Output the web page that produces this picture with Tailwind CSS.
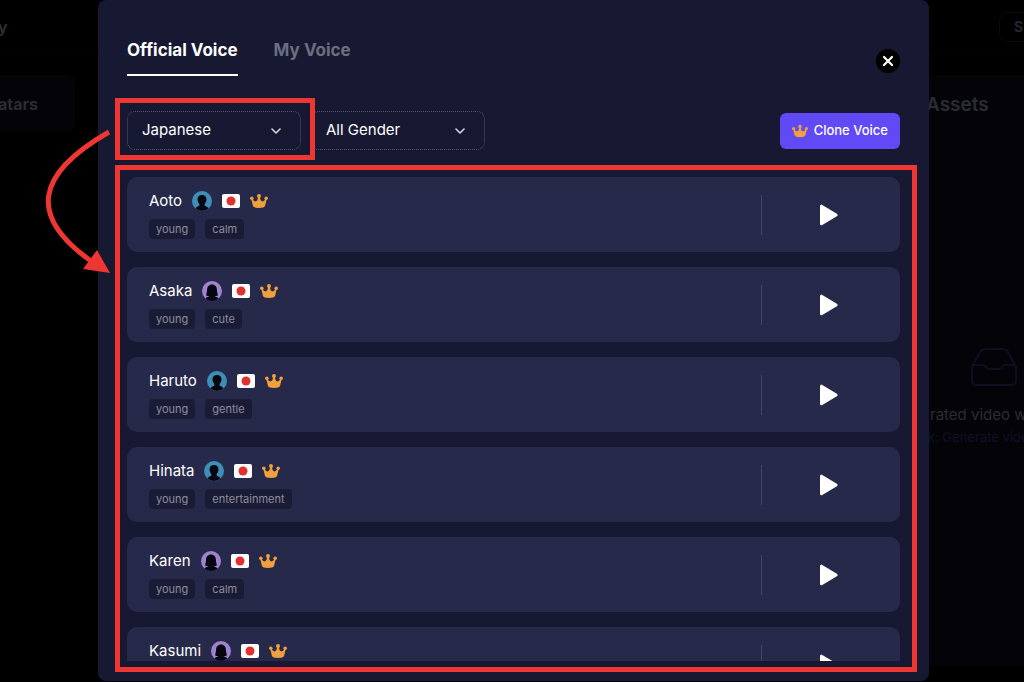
<!DOCTYPE html>
<html lang="en">
<head>
  <meta charset="UTF-8">
  <meta name="viewport" content="width=device-width, initial-scale=1">
  <title>Official Voice</title>
  <script src="https://cdn.jsdelivr.net/npm/@tailwindcss/browser@4"></script>
</head>
<body class="h-screen overflow-hidden bg-black font-['Inter','Liberation_Sans',sans-serif] text-white">

<!-- Icons -->
<svg class="hidden" xmlns="http://www.w3.org/2000/svg">
  <symbol id="male" viewBox="0 0 20 20">
    <circle cx="10" cy="10" r="10" fill="#3d8fb8"/>
    <path d="M10 4c-2.900 0-4.600 1.900-4.500 4.600.1 1.800.8 3.400 1.900 4.500v1.500c-.7 1-2.900 1-3.900 2.600A9.900 9.900 0 0 0 10 20a9.900 9.900 0 0 0 6.500-2.800c-1-1.600-3.200-1.600-3.900-2.600v-1.500c1.100-1.100 1.800-2.700 1.900-4.500C14.600 5.900 12.900 4 10 4z" fill="#05060f"/>
  </symbol>
  <symbol id="female" viewBox="0 0 20 20">
    <circle cx="10" cy="10" r="10" fill="#9f83cf"/>
    <path d="M10 3.500c-3.200 0-4.900 2.300-4.900 5.300 0 2.200-.8 4-.9 5.600 1.200.7 2.400.8 3.400.6-.9 1-3 1-4 2.400A9.900 9.900 0 0 0 10 20a9.900 9.900 0 0 0 6.400-2.600c-1-1.400-3.100-1.400-4-2.400 1 .2 2.200.1 3.400-.6-.1-1.600-.9-3.400-.9-5.600 0-3-1.700-5.300-4.900-5.300z" fill="#05060f"/>
  </symbol>
  <symbol id="japan" viewBox="0 0 18 14">
    <rect width="18" height="14" rx="2" fill="#fff"/>
    <circle cx="9" cy="7" r="4.500" fill="#e03131"/>
  </symbol>
  <symbol id="crown" viewBox="0 0 18 14">
    <path d="M1.300 5 2.800 4.600C3.100 6.400 4 7.400 5.300 7.400 7 7.400 8 5.800 8 3h2c0 2.800 1 4.400 2.700 4.400 1.300 0 2.200-1 2.500-2.800l1.500.4-1.600 6.800c-.4 1.400-2.800 2.200-6.100 2.200s-5.700-.8-6.100-2.200z" fill="#f0a03c"/>
    <circle cx="9" cy="2" r="2" fill="#f0a03c"/>
    <circle cx="1.800" cy="4.300" r="1.800" fill="#f0a03c"/>
    <circle cx="16.200" cy="4.300" r="1.800" fill="#f0a03c"/>
  </symbol>
  <symbol id="play" viewBox="0 0 22 24">
    <path d="M1.500 3.200v17.600L16.100 12z" fill="#fff" stroke="#fff" stroke-width="3" stroke-linejoin="round"/>
  </symbol>
  <symbol id="chevron" viewBox="0 0 12 8">
    <path d="M2 2 6 6l4-4" fill="none" stroke="#d5d6df" stroke-width="1.600" stroke-linecap="round" stroke-linejoin="round"/>
  </symbol>
</svg>

<!-- Page under the dialog -->
<div class="flex h-full flex-col pb-4 text-[#2b2b33]">
  <header class="flex h-[55px] shrink-0 items-center justify-between border-b border-[#050508]">
    <span class="-ml-0.5 text-base font-bold">y</span>
    <button class="h-[30px] w-[25px] rounded-l-lg border border-r-0 border-[#08080e] pl-3.5 text-left text-sm font-semibold">S</button>
  </header>
  <div class="flex flex-1 justify-between pt-5">
    <div class="flex h-[57px] w-[75px] items-center rounded-r-lg bg-[#040408] text-base font-bold"><span class="-ml-0.5">atars</span></div>
    <section class="flex w-[98px] flex-col bg-[#040408] whitespace-nowrap">
      <h2 class="mt-4 text-[19px] leading-7 font-semibold">Assets</h2>
      <svg class="mt-[228px] ml-11 h-10 w-12 shrink-0" viewBox="0 0 48 40" fill="none" stroke="#0d0e20" stroke-width="2">
        <path d="M2 20 10 5q2-3 5-3h18q3 0 5 3l8 15v14q0 4-4 4H6q-4 0-4-4z"/>
        <path d="M2 18h11q2 0 3 2t3 2h10q2 0 3-2t3-2h11"/>
      </svg>
      <p class="mt-4 pl-1 text-[15px] leading-6">rated video w</p>
      <p class="pl-0.5 text-[13px] leading-5 text-[#0f1026]">k: Generate vide</p>
    </section>
  </div>
</div>

<!-- Voice dialog -->
<div class="fixed inset-0 pr-[95px] pb-px pl-[98px]">
  <div role="dialog" aria-label="Voices" class="flex h-full flex-col rounded-lg bg-[#161931] pr-[29px] pb-5 pl-[29px]">

    <div class="flex justify-between pt-[38px]">
      <div class="flex gap-9 text-[17px] leading-6 font-bold">
        <button class="border-b-2 border-white pb-3">Official Voice</button>
        <button class="border-b-2 border-transparent pb-3 text-[#6d6e80]">My Voice</button>
      </div>
      <button aria-label="Close" class="mb-[3px] flex size-6 items-center justify-center self-end rounded-full bg-black">
        <svg class="size-3" viewBox="0 0 12 12" stroke="#fff" stroke-width="2.200" stroke-linecap="round"><path d="M2 2l8 8M10 2l-8 8"/></svg>
      </button>
    </div>

    <div class="mt-[35px] flex items-center justify-between">
      <div class="flex gap-2.5 text-[15px]">
        <div class="relative z-10">
          <select aria-label="Language" class="h-[39px] w-[174px] appearance-none rounded-lg border border-dotted border-[#55576b] pl-3.5">
            <option>Japanese</option>
          </select>
          <svg class="pointer-events-none absolute top-4 right-[19px] h-2 w-3"><use href="#chevron"/></svg>
          <!-- Callout round the language filter, with its arrow -->
          <div class="pointer-events-none absolute -top-[13px] -right-[14px] -bottom-[10px] -left-3 border-5 border-[#ee3632]"></div>
          <svg class="pointer-events-none absolute top-4 -left-24 h-[148px] w-20" viewBox="-16 0 80 148" fill="none">
            <path d="M62 5C-13 48-18 90 44 134" stroke="#ee3632" stroke-width="5"/>
            <path d="M50 123 36 142 63 146z" fill="#ee3632"/>
          </svg>
        </div>
        <div class="relative">
          <select aria-label="Gender" class="h-[39px] w-[174px] appearance-none rounded-lg border border-dotted border-[#55576b] pl-3.5">
            <option>All Gender</option>
          </select>
          <svg class="pointer-events-none absolute top-4 right-[19px] h-2 w-3"><use href="#chevron"/></svg>
        </div>
      </div>
      <button class="flex h-9 items-center gap-1.5 rounded-md bg-[#6149f6] px-3 text-[13px] font-medium">
        <svg class="h-3.5 w-4"><use href="#crown"/></svg>
        Clone Voice
      </button>
    </div>

    <div class="relative mt-[27px] min-h-0 flex-1">
      <ul id="voices" class="flex h-full flex-col gap-[15px] overflow-hidden"></ul>
      <div class="pointer-events-none absolute -top-3 -right-[17px] -bottom-[11px] -left-3 border-5 border-[#ee3632]"></div>
    </div>
  </div>
</div>

<template id="voice">
  <li class="flex shrink-0 items-center justify-between rounded-[10px] bg-[#27294b]">
    <div class="pt-3.5 pb-[13px] pl-[22px]">
      <div class="flex h-5 items-center gap-2.5">
        <span class="name text-[15px]"></span>
        <svg class="size-5"><use class="avatar"/></svg>
        <svg class="h-3.5 w-[18px]"><use href="#japan"/></svg>
        <svg class="h-3.5 w-[18px]"><use href="#crown"/></svg>
      </div>
      <div class="tags mt-2 flex h-5 gap-2.5"></div>
    </div>
    <div class="flex h-10 w-[139px] items-center justify-center border-l border-[#45465f]">
      <button aria-label="Play"><svg class="h-6 w-[22px]"><use href="#play"/></svg></button>
    </div>
  </li>
</template>

<script>
  const voices = [
    ['Aoto', 'male', ['young', 'calm']],
    ['Asaka', 'female', ['young', 'cute']],
    ['Haruto', 'male', ['young', 'gentle']],
    ['Hinata', 'male', ['young', 'entertainment']],
    ['Karen', 'female', ['young', 'calm']],
    ['Kasumi', 'female', []],
  ];

  const template = document.getElementById('voice');

  voices.forEach(([name, gender, tags]) => {
    const item = template.content.cloneNode(true);
    item.querySelector('.name').textContent = name;
    item.querySelector('.avatar').setAttribute('href', '#' + gender);
    tags.forEach((tag) => {
      const label = document.createElement('span');
      label.className = 'rounded-sm bg-[#1a1c36] px-[7px] text-[11px] leading-5 text-[#8c8d9d]';
      label.textContent = tag;
      item.querySelector('.tags').append(label);
    });
    document.getElementById('voices').append(item);
  });
</script>

</body>
</html>
